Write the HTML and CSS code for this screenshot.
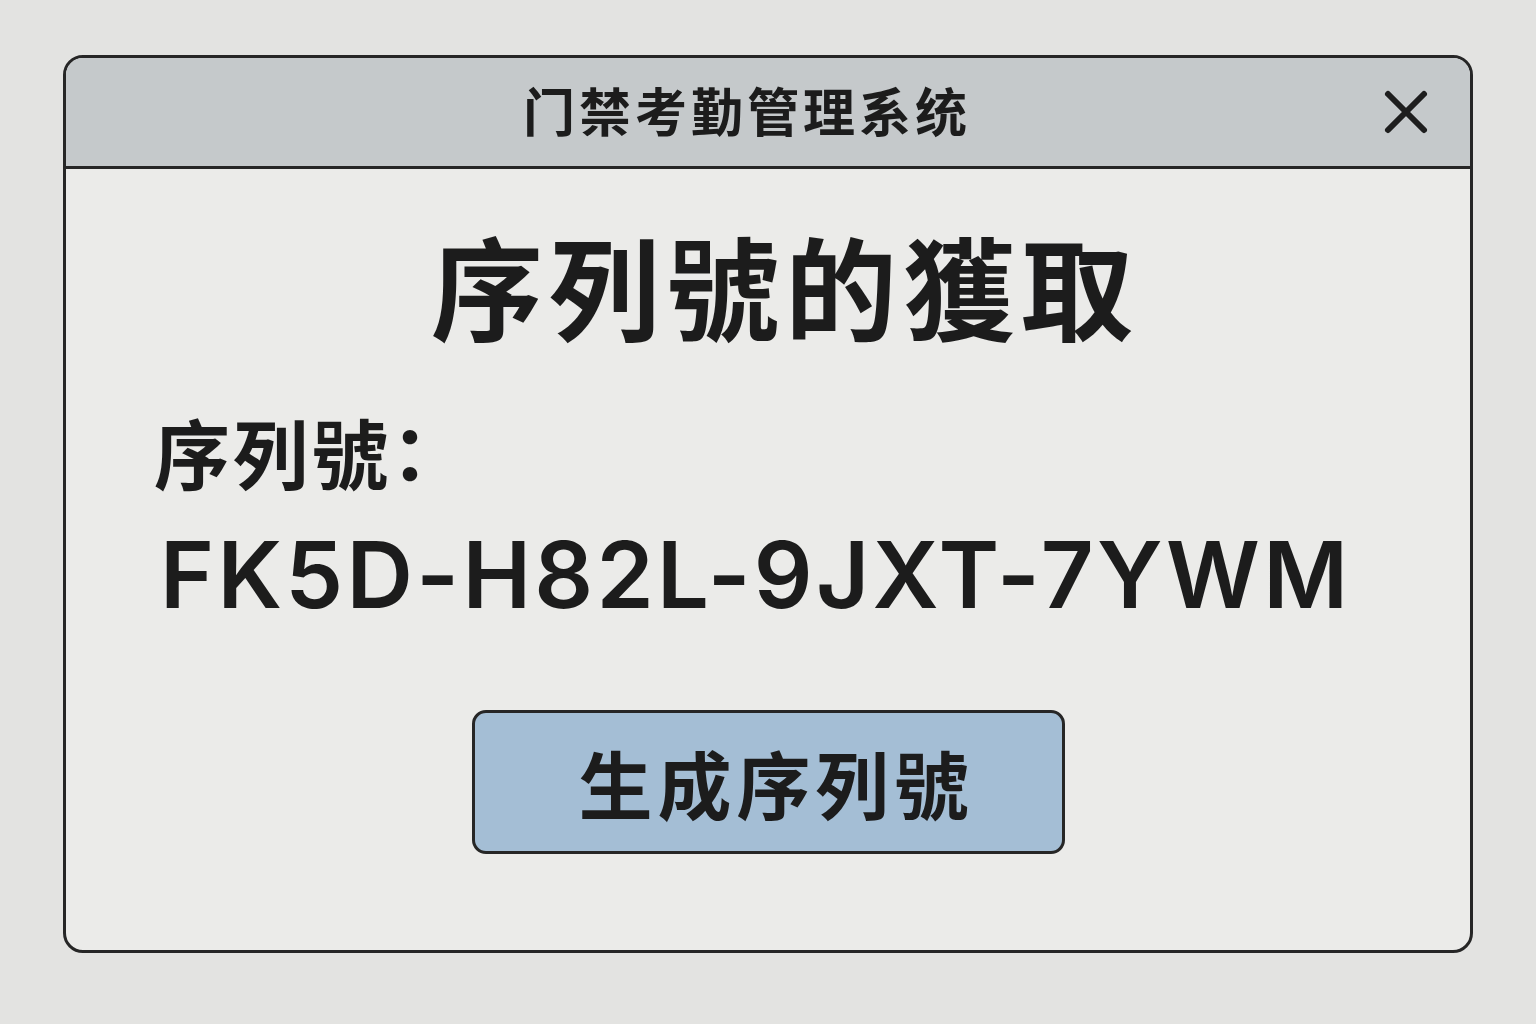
FILE: index.html
```html
<!DOCTYPE html>
<html>
	<head>
		<meta charset="UTF-8">
		<title>门禁考勤管理系统</title>
		<link rel="stylesheet" href="styles.css">
	</head>
	<body>
		<div class="window">
			<div class="titlebar">
				<span class="title">门禁考勤管理系统</span>
				<span class="close">
					<svg width="48" height="48" viewBox="0 0 48 48">
						<path d="M6 6 L42 42 M42 6 L6 42" stroke="#1e1e1e" stroke-width="6" stroke-linecap="round"/>
					</svg>
				</span>
			</div>
			<div class="content">
				<h1 class="heading">序列號的獲取</h1>
				<div class="label">序列號<span class="colon">：</span></div>
				<div class="serial">FK5D-H82L-9JXT-7YWM</div>
				<div class="actions">
					<button class="btn">生成序列號</button>
				</div>
			</div>
		</div>
	</body>
</html>
```
FILE: styles.css
```css
*{
	margin: 0;
	padding: 0;
	box-sizing: border-box;
}
body{
	background: #e3e3e1;
	padding: 55px 63px;
	font-family: "Noto Sans CJK TC", "Noto Sans CJK SC", sans-serif;
	color: #1c1c1c;
}
.window{
	width: 1410px;
	height: 898px;
	border: 3px solid #262626;
	border-radius: 20px;
	background: #ebebe9;
	overflow: hidden;
	display: flex;
	flex-direction: column;
}
.titlebar{
	height: 111px;
	background: #c5c9cb;
	border-bottom: 3px solid #262626;
	display: flex;
	align-items: center;
}
.titlebar .title{
	flex: 1;
	text-align: center;
	padding-left: 46px;
	padding-bottom: 6px;
	font-size: 52px;
	font-weight: 700;
	letter-spacing: 4px;
}
.titlebar .close{
	width: 48px;
	height: 48px;
	margin-right: 40px;
	display: flex;
}
.content{
	flex: 1;
	display: flex;
	flex-direction: column;
	padding: 48px 0 0 88px;
}
.heading{
	font-size: 112px;
	font-weight: 700;
	line-height: 1.2;
	letter-spacing: 6px;
	text-align: center;
	margin-left: -88px;
	padding-left: 34px;
}
.label{
	margin-top: 51px;
	font-size: 76px;
	font-weight: 700;
	line-height: 1.3;
	letter-spacing: 3px;
}
.label .colon{
	font-feature-settings: "halt";
}
.serial{
	margin-top: 19px;
	margin-left: 6px;
	font-family: Inter, "Liberation Sans", sans-serif;
	font-size: 92px;
	font-weight: 600;
	line-height: 1.2;
	letter-spacing: 3.3px;
}
.actions{
	margin-top: 79px;
	margin-left: -88px;
	display: flex;
	justify-content: center;
}
.btn{
	width: 593px;
	height: 144px;
	padding-left: 16px;
	background: #a4bed5;
	border: 3px solid #262626;
	border-radius: 14px;
	font-family: "Noto Sans CJK TC", "Noto Sans CJK SC", sans-serif;
	font-size: 74px;
	font-weight: 700;
	letter-spacing: 5px;
	color: #1c1c1c;
}
```
